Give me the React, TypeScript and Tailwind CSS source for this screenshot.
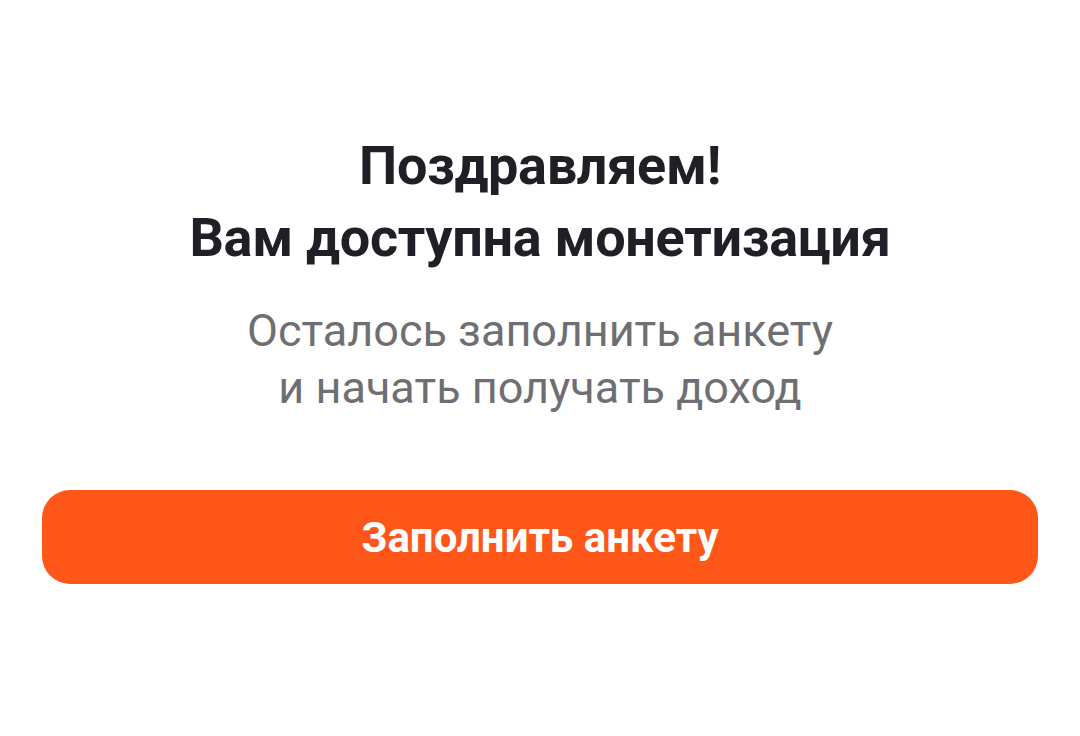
export default function App() {
  return (
    <div className="w-[1080px] h-[736px] bg-white font-['Roboto',sans-serif] flex flex-col items-center pt-[130px] px-[42px]">
      <h1 className="text-center text-[54px] leading-[72px] font-bold text-[#1f2026] tracking-[-0.3px]">
        Поздравляем!
        <br />
        Вам доступна монетизация
      </h1>
      <p className="mt-[28px] text-center text-[45px] leading-[57px] text-[#6f6f73]">
        Осталось заполнить анкету
        <br />
        и начать получать доход
      </p>
      <button className="mt-[74px] w-full h-[94px] rounded-[28px] bg-[#ff5719] text-white text-[42px] font-bold">
        Заполнить анкету
      </button>
    </div>
  );
}
